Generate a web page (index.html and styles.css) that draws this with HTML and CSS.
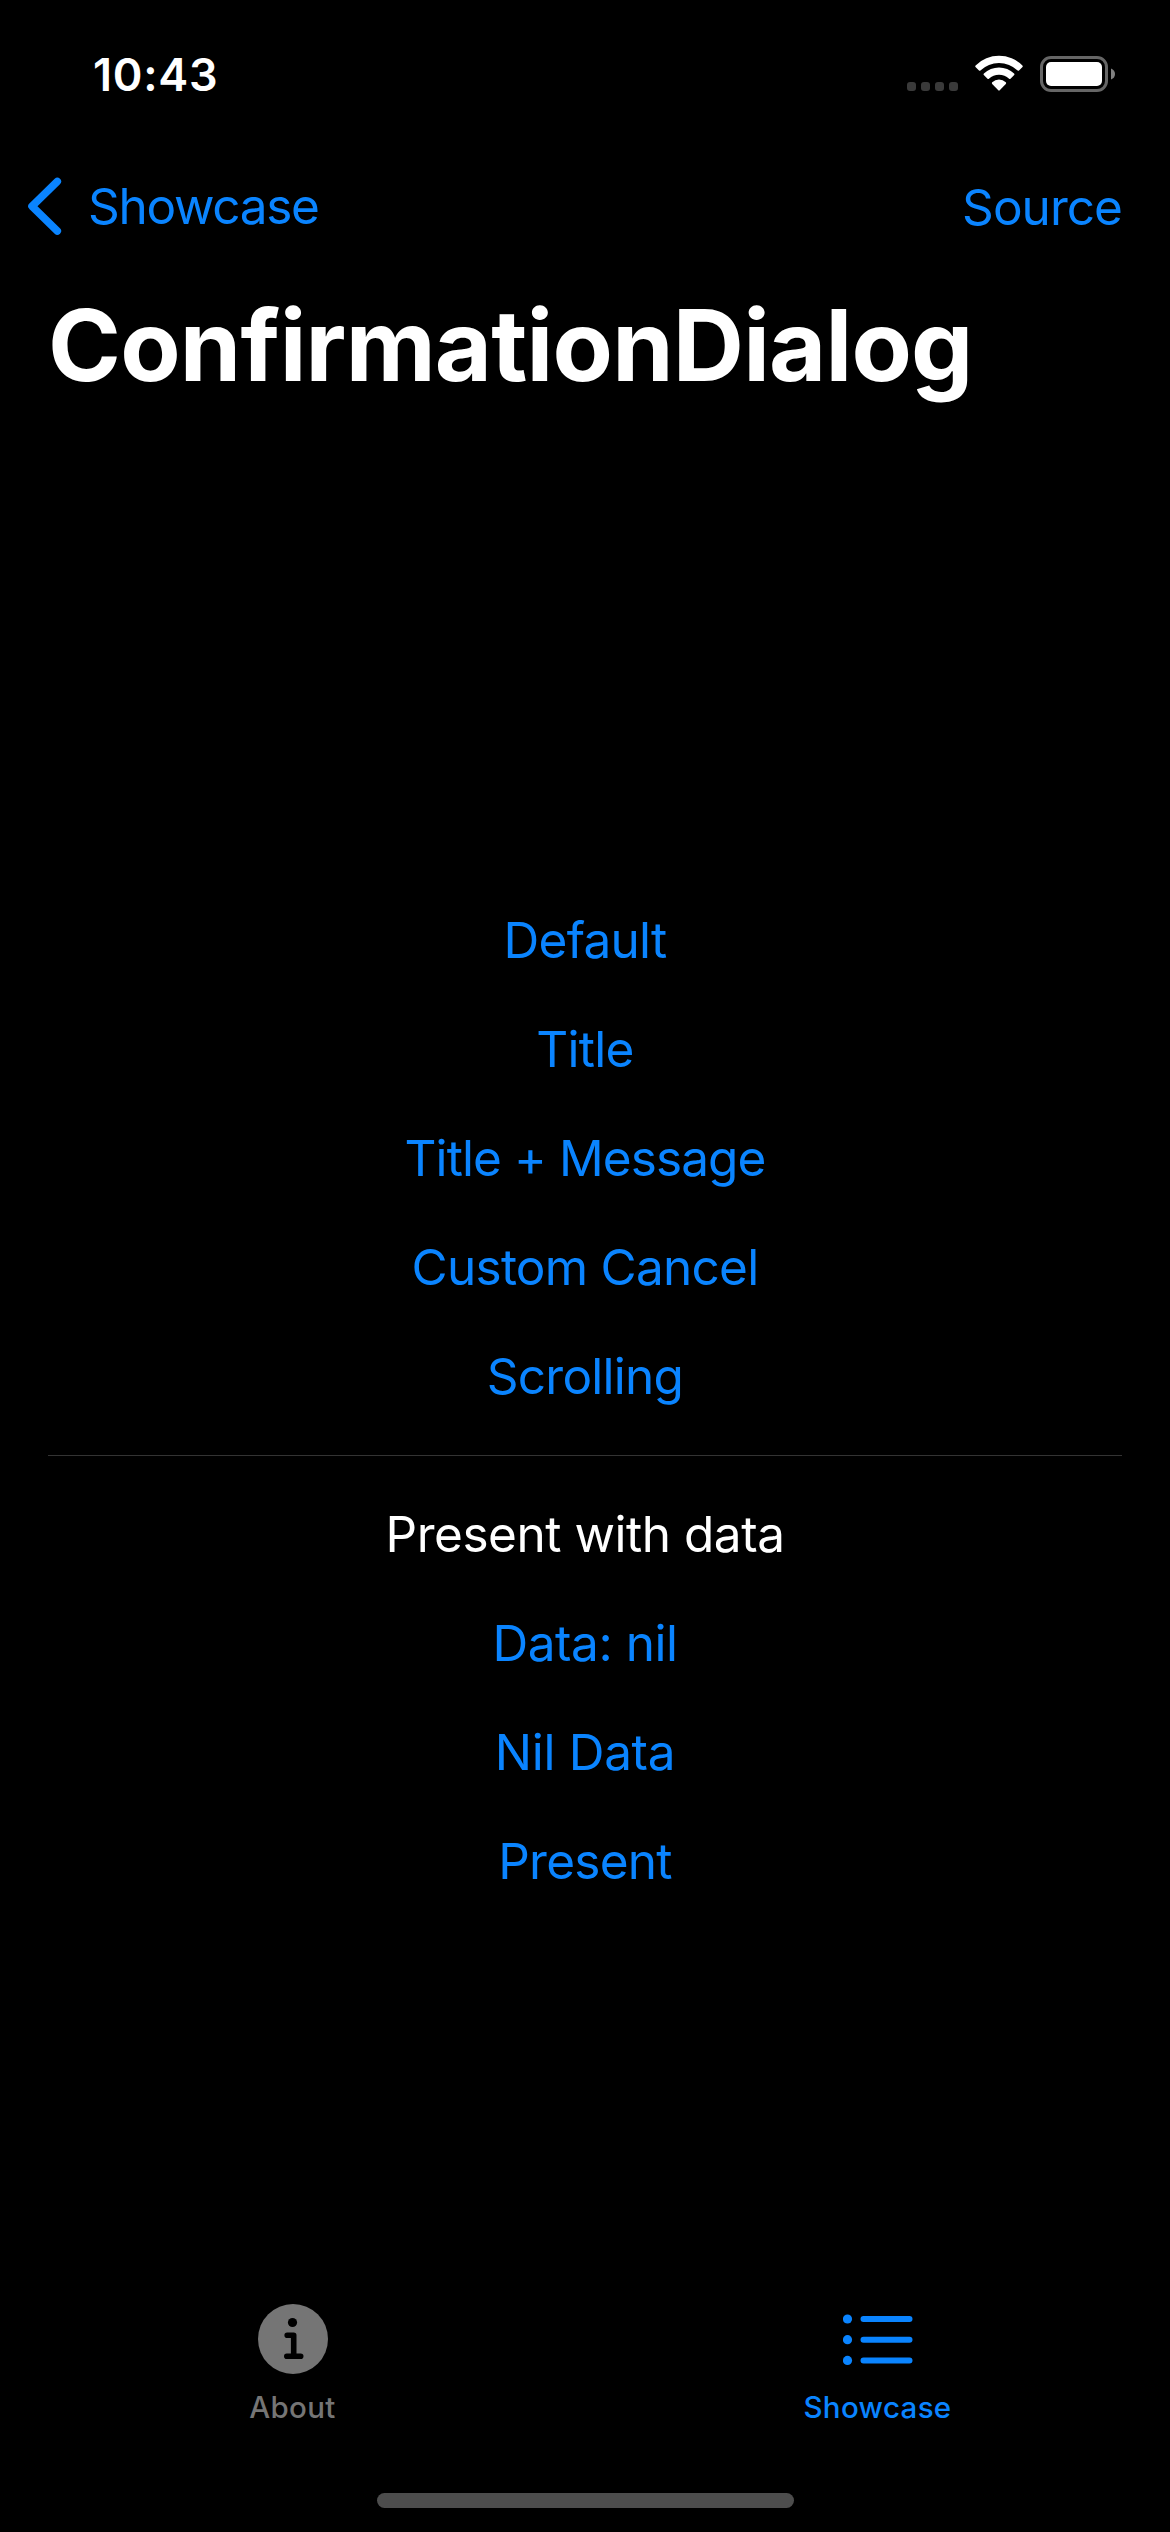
FILE: index.html
```html
<!DOCTYPE html>
<html lang="en">
<head>
<meta charset="utf-8">
<title>ConfirmationDialog</title>
<link rel="stylesheet" href="styles.css">
</head>
<body>
<div class="screen">
  <header class="status">
    <span class="time">10:43</span>
    <div class="status-icons">
      <svg class="cellular" width="51" height="9" viewBox="0 0 51 9">
        <rect width="9" height="9" rx="3"/><rect x="14" width="9" height="9" rx="3"/><rect x="28" width="9" height="9" rx="3"/><rect x="42" width="9" height="9" rx="3"/>
      </svg>
      <svg class="wifi" width="48" height="36" viewBox="0 0 48 36">
        <path d="M.6 10.4A33.5 33.5 0 0 1 47.4 10.4Q48.2 11.1 47.5 11.9L44 15.5Q43.3 16.1 42.6 15.5A27 27 0 0 0 5.4 15.5Q4.700 16.100 4 15.500L.5 11.900Q-.2 11.100 .6 10.400Z"/>
        <path d="M8.900 18.600A21.800 21.800 0 0 1 39.100 18.600Q39.900 19.400 39.200 20.100L35.500 23.700Q34.800 24.300 34.100 23.700A15 15 0 0 0 13.900 23.700Q13.200 24.300 12.500 23.700L8.800 20.100Q8.100 19.400 8.900 18.600Z"/>
        <path d="M17.200 27.200A10 10 0 0 1 30.800 27.200Q31.600 28 30.800 28.900L24.700 35.300Q24 36 23.300 35.300L17.200 28.900Q16.400 28 17.200 27.200Z"/>
      </svg>
      <svg class="battery" width="76" height="36" viewBox="0 0 76 36">
        <rect class="battery-shell" x="1.500" y="1.500" width="65" height="33" rx="9.500"/>
        <rect class="battery-level" x="6" y="6" width="56" height="24" rx="5"/>
        <path class="battery-cap" d="M71 12.500Q75 14 75 18Q75 22 71 23.500Z"/>
      </svg>
    </div>
  </header>
  <nav class="nav">
    <a class="back">
      <svg width="36" height="60" viewBox="0 0 36 60"><path d="M31.300 5.500L6 30.200L31.300 55"/></svg>
      <span class="back-label">Showcase</span>
    </a>
    <a class="source">Source</a>
  </nav>
  <h1 class="title">ConfirmationDialog</h1>
  <main class="content">
    <a class="row">Default</a>
    <a class="row">Title</a>
    <a class="row snug">Title + Message</a>
    <a class="row">Custom Cancel</a>
    <a class="row">Scrolling</a>
    <hr class="divider">
    <p class="row heading loose">Present with data</p>
    <a class="row loose">Data: nil</a>
    <a class="row looser">Nil Data</a>
    <a class="row">Present</a>
  </main>
  <footer class="tabs">
    <a class="tab">
      <svg width="70" height="70" viewBox="0 0 70 70">
        <circle class="info-disc" cx="35" cy="35" r="35"/>
        <circle cx="34.500" cy="18.500" r="4.600"/>
        <path class="info-stem" d="M29.200 31.300H35.700V52.300M28.800 52.300H42.700"/>
      </svg>
      <span>About</span>
    </a>
    <a class="tab active">
      <svg width="70" height="70" viewBox="0 0 70 70">
        <g class="list-dots"><circle cx="4.500" cy="15" r="4.600"/><circle cx="4.500" cy="35.700" r="4.600"/><circle cx="4.500" cy="56.400" r="4.600"/></g>
        <path class="list-lines" d="M20.500 15H66.500M20.500 35.700H66.500M20.500 56.400H66.500"/>
      </svg>
      <span>Showcase</span>
    </a>
  </footer>
  <div class="home-indicator"></div>
</div>
</body>
</html>
```
FILE: styles.css
```css
* { box-sizing: border-box; }
body {
  margin: 0;
  background: #000;
  color: #fff;
  font-family: Inter, "Liberation Sans", sans-serif;
}
.screen {
  width: 1170px;
  height: 2532px;
  display: flex;
  flex-direction: column;
  overflow: hidden;
}
svg { display: block; flex: none; }

.status {
  height: 141px;
  padding: 47px 54px 0 93px;
  display: flex;
  justify-content: space-between;
  align-items: flex-start;
}
.time {
  font-size: 45px;
  font-weight: 600;
  line-height: 55px;
  letter-spacing: 0.0165em;
}
.status-icons {
  display: flex;
  align-items: flex-end;
  height: 44px;
}
.cellular { fill: #3a3a3a; margin-right: 17px; }
.wifi { fill: #fff; margin-right: 17px; }
.battery { margin-bottom: -1px; }
.battery-shell { fill: none; stroke: #666; stroke-width: 3; }
.battery-level { fill: #fff; }
.battery-cap { fill: #808080; }

.nav {
  height: 132px;
  padding: 35px 48px 0 26px;
  display: flex;
  justify-content: space-between;
  align-items: flex-start;
  color: #0a84ff;
  font-size: 49.5px;
  line-height: 61px;
}
.back { display: flex; gap: 26px; }
.back path {
  fill: none;
  stroke: #0a84ff;
  stroke-width: 7.6;
  stroke-linecap: round;
  stroke-linejoin: round;
}
.back-label { letter-spacing: -0.0263em; }
.source { padding-top: 1px; letter-spacing: -0.0194em; }

.title {
  margin: 0;
  height: 156px;
  padding: 12px 0 0 48px;
  font-size: 98.6px;
  font-weight: 700;
  line-height: 120px;
  letter-spacing: -0.0081em;
}

.content {
  flex: 1;
  padding: 481px 48px 0;
  display: flex;
  flex-direction: column;
  gap: 48px;
}
.row {
  margin: 0;
  font-size: 49.5px;
  line-height: 61px;
  letter-spacing: -0.015em;
  text-align: center;
  color: #0a84ff;
}
.heading { color: #fff; }
.snug { letter-spacing: -0.0181em; }
.loose { letter-spacing: -0.0094em; }
.looser { letter-spacing: -0.0062em; }
.divider {
  width: 100%;
  height: 1px;
  margin: 0;
  border: 0;
  background: #333;
}

.tabs {
  height: 210px;
  padding-top: 21px;
  display: flex;
}
.tab {
  flex: 1;
  display: flex;
  flex-direction: column;
  align-items: center;
  gap: 15px;
  color: #757575;
  font-size: 29.5px;
  font-weight: 500;
  line-height: 36px;
  letter-spacing: 0.0115em;
}
.active { color: #0a84ff; }
.info-disc { fill: #757575; }
.info-stem {
  fill: none;
  stroke: #000;
  stroke-width: 5.6;
  stroke-linecap: round;
  stroke-linejoin: round;
}
.list-dots { fill: #0a84ff; }
.list-lines {
  fill: none;
  stroke: #0a84ff;
  stroke-width: 6;
  stroke-linecap: round;
}

.home-indicator {
  width: 417px;
  height: 15px;
  margin: 0 auto 24px;
  border-radius: 8px;
  background: #4d4d4d;
}
```
